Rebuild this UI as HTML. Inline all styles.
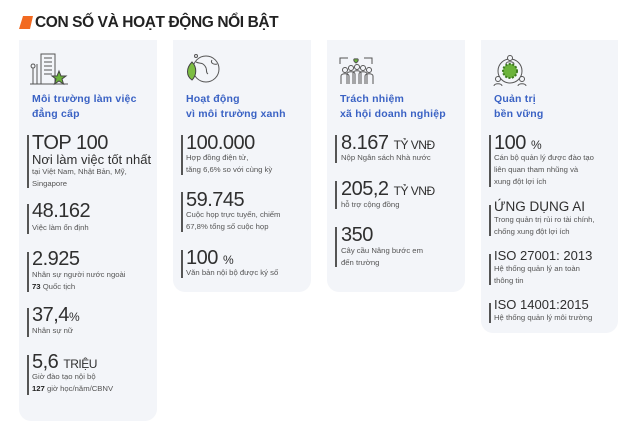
<!DOCTYPE html>
<html><head><meta charset="utf-8"><style>
*{margin:0;padding:0;box-sizing:border-box}
body{width:640px;height:431px;background:#fff;position:relative;overflow:hidden;font-family:"Liberation Sans",sans-serif;color:#2b2b2b}
.card{position:absolute;top:40px;background:#f3f5f9;border-radius:0 0 12px 12px}
.a{position:absolute;white-space:nowrap}
.h{color:#3a62c4;font-weight:bold;font-size:10.5px;line-height:14.5px;letter-spacing:0.2px}
.bar{position:absolute;width:1.5px;background:#555}
.n{font-size:20px;line-height:20px;color:#2f2f2f;letter-spacing:-0.5px}
.u{font-size:12px}
.s{font-size:7.7px;line-height:12px;color:#555}
.m{font-size:13px;line-height:14px;color:#2f2f2f}
</style></head><body>
<svg class="a" style="left:19px;top:16px" width="14" height="13"><polygon points="4,0 14,0 11,13 0,13" fill="#f26a21"/></svg>
<div class="a" style="left:35px;top:14px;font-size:15.5px;font-weight:bold;color:#222;letter-spacing:-0.4px">CON SỐ VÀ HOẠT ĐỘNG NỔI BẬT</div>

<div class="card" style="left:19px;width:138px;height:381px"></div>
<div class="card" style="left:173px;width:138px;height:252px"></div>
<div class="card" style="left:327px;width:138px;height:252px"></div>
<div class="card" style="left:481px;width:137px;height:293px"></div>

<!-- icons -->
<svg class="a" style="left:28px;top:52px" width="42" height="34" fill="none" stroke="#555" stroke-width="1">
<rect x="13" y="2" width="14" height="30"/><path d="M16 6h8M16 10h8M16 14h8M16 18h8M16 22h8M9 12v20M5 16v16M5 16a2 2 0 1 1 0.1 0M2 32h38"/>
<polygon points="31,19 33,24 38,24 34,27 35.5,32 31,29 26.5,32 28,27 24,24 29,24" fill="#6bb33b" stroke="#444"/></svg>
<svg class="a" style="left:182px;top:52px" width="40" height="32" fill="none" stroke="#555" stroke-width="1">
<circle cx="24" cy="17" r="13"/><path d="M14 10c4 2 6 0 9 4s0 6 3 8M30 8c-2 3 2 5 5 4"/>
<path d="M10 28c-6-4-6-12 0-18c5 5 5 13 0 18z" fill="#7cbd43" stroke="#444"/><circle cx="14" cy="4" r="1.5"/></svg>
<svg class="a" style="left:336px;top:54px" width="40" height="32" fill="none" stroke="#555" stroke-width="1">
<path d="M4 10V4h8M36 10V4h-8"/><path d="M20 9c-3-2-3-5 0-4c3-1 3 2 0 4z" fill="#6bb33b"/>
<circle cx="9" cy="16" r="2.5"/><circle cx="15" cy="14" r="2.5"/><circle cx="21" cy="13" r="2.5"/><circle cx="27" cy="14" r="2.5"/><circle cx="33" cy="16" r="2.5"/>
<path d="M5 30v-8c0-3 8-3 8 0v8M11 30v-10c0-3 8-3 8 0v10M17 30v-11c0-3 8-3 8 0v11M23 30v-10c0-3 8-3 8 0v10M29 30v-8c0-3 8-3 8 0v8"/></svg>
<svg class="a" style="left:490px;top:53px" width="40" height="34" fill="none" stroke="#555" stroke-width="1">
<circle cx="20" cy="18" r="12"/><circle cx="20" cy="18" r="7" fill="#6bb33b" stroke="#3d7a1f" stroke-width="2" stroke-dasharray="2 1.5"/>
<circle cx="20" cy="5" r="2.5" fill="#f3f5f9"/><circle cx="8" cy="26" r="2.5" fill="#f3f5f9"/><circle cx="32" cy="26" r="2.5" fill="#f3f5f9"/>
<path d="M16 11c0-3 8-3 8 0M4 33c0-3 8-3 8 0M28 33c0-3 8-3 8 0"/></svg>

<!-- headings -->
<div class="a h" style="left:32px;top:92px">Môi trường làm việc<br>đẳng cấp</div>
<div class="a h" style="left:186px;top:92px">Hoạt động<br>vì môi trường xanh</div>
<div class="a h" style="left:340px;top:92px">Trách nhiệm<br>xã hội doanh nghiệp</div>
<div class="a h" style="left:494px;top:92px">Quản trị<br>bền vững</div>

<!-- card1 -->
<div class="bar" style="left:27px;top:135px;height:53px"></div>
<div class="a n" style="left:32px;top:133px">TOP 100</div>
<div class="a m" style="left:32px;top:153px">Nơi làm việc tốt nhất</div>
<div class="a s" style="left:32px;top:166px">tại Việt Nam, Nhật Bản, Mỹ,<br>Singapore</div>
<div class="bar" style="left:27px;top:204px;height:30px"></div>
<div class="a n" style="left:32px;top:201px">48.162</div>
<div class="a s" style="left:32px;top:222px">Việc làm ổn định</div>
<div class="bar" style="left:27px;top:252px;height:40px"></div>
<div class="a n" style="left:32px;top:249px">2.925</div>
<div class="a s" style="left:32px;top:269px">Nhân sự người nước ngoài<br><b style="color:#222">73</b> Quốc tịch</div>
<div class="bar" style="left:27px;top:308px;height:29px"></div>
<div class="a n" style="left:32px;top:305px">37,4<span class="u">%</span></div>
<div class="a s" style="left:32px;top:325px">Nhân sự nữ</div>
<div class="bar" style="left:27px;top:355px;height:40px"></div>
<div class="a n" style="left:32px;top:352px">5,6 <span class="u">TRIỆU</span></div>
<div class="a s" style="left:32px;top:371px">Giờ đào tạo nội bộ<br><b style="color:#222">127</b> giờ học/năm/CBNV</div>

<!-- card2 -->
<div class="bar" style="left:181px;top:135px;height:40px"></div>
<div class="a n" style="left:186px;top:133px">100.000</div>
<div class="a s" style="left:186px;top:152px">Hợp đồng điện tử,<br>tăng 6,6% so với cùng kỳ</div>
<div class="bar" style="left:181px;top:192px;height:40px"></div>
<div class="a n" style="left:186px;top:190px">59.745</div>
<div class="a s" style="left:186px;top:209px">Cuộc họp trực tuyến, chiếm<br>67,8% tổng số cuộc họp</div>
<div class="bar" style="left:181px;top:250px;height:28px"></div>
<div class="a n" style="left:186px;top:248px">100 <span class="u">%</span></div>
<div class="a s" style="left:186px;top:267px">Văn bản nội bộ được ký số</div>

<!-- card3 -->
<div class="bar" style="left:335px;top:135px;height:28px"></div>
<div class="a n" style="left:341px;top:133px">8.167 <span class="u">TỶ VNĐ</span></div>
<div class="a s" style="left:341px;top:152px">Nộp Ngân sách Nhà nước</div>
<div class="bar" style="left:335px;top:181px;height:28px"></div>
<div class="a n" style="left:341px;top:179px">205,2 <span class="u">TỶ VNĐ</span></div>
<div class="a s" style="left:341px;top:199px">hỗ trợ cộng đồng</div>
<div class="bar" style="left:335px;top:227px;height:40px"></div>
<div class="a n" style="left:341px;top:225px">350</div>
<div class="a s" style="left:341px;top:245px">Cây cầu Nâng bước em<br>đến trường</div>

<!-- card4 -->
<div class="bar" style="left:489px;top:135px;height:52px"></div>
<div class="a n" style="left:494px;top:133px">100 <span class="u">%</span></div>
<div class="a s" style="left:494px;top:152px">Cán bộ quản lý được đào tạo<br>liên quan tham nhũng và<br>xung đột lợi ích</div>
<div class="bar" style="left:489px;top:205px;height:31px"></div>
<div class="a m" style="left:494px;top:200px;font-size:13.5px">ỨNG DỤNG AI</div>
<div class="a s" style="left:494px;top:214px">Trong quản trị rủi ro tài chính,<br>chống xung đột lợi ích</div>
<div class="bar" style="left:489px;top:254px;height:31px"></div>
<div class="a m" style="left:494px;top:249px">ISO 27001: 2013</div>
<div class="a s" style="left:494px;top:263px">Hệ thống quản lý an toàn<br>thông tin</div>
<div class="bar" style="left:489px;top:303px;height:20px"></div>
<div class="a m" style="left:494px;top:298px">ISO 14001:2015</div>
<div class="a s" style="left:494px;top:312px">Hệ thống quản lý môi trường</div>
</body></html>
